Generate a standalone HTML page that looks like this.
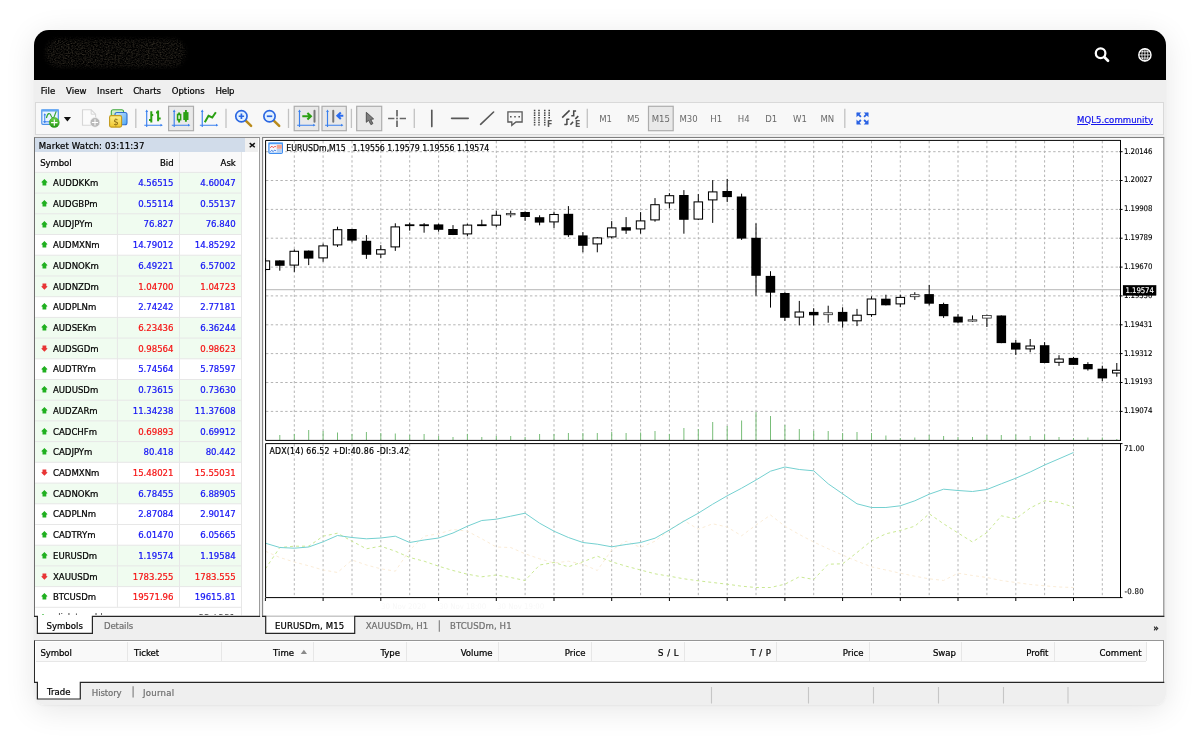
<!DOCTYPE html>
<html lang="en"><head><meta charset="utf-8"><title>WebTerminal</title>
<style>
html,body{margin:0;padding:0;background:#fff}
body{width:1200px;height:745px;position:relative;overflow:hidden;font-family:"DejaVu Sans Condensed", "Liberation Sans", sans-serif;font-size:9.5px;color:#000}
.abs{position:absolute}
.t{white-space:nowrap;-webkit-text-stroke:.22px}
#win{position:absolute;left:34px;top:30px;width:1132px;height:675px;border-radius:15px 15px 11px 11px;background:#efefef;overflow:hidden}
#shadow{position:absolute;left:34px;top:30px;width:1132px;height:675px;border-radius:15px 15px 11px 11px;box-shadow:0 5px 30px rgba(0,0,0,.10),0 1px 2px rgba(0,0,0,.04)}
#in{will-change:transform;position:absolute;left:-34px;top:-30px;width:1200px;height:745px}
</style></head><body>
<div id="shadow"></div>
<div id="win"><div id="in">
<div class="abs" style="left:34px;top:30px;width:1132px;height:49.8px;background:#000"></div>
<svg class="abs" style="left:40px;top:32px" width="160" height="46" viewBox="0 0 160 46"><defs><filter id="nz" x="0" y="0" width="100%" height="100%" color-interpolation-filters="sRGB"><feTurbulence type="fractalNoise" baseFrequency="0.6 0.8" numOctaves="2" seed="7" result="n"/><feColorMatrix in="n" type="matrix" values="0 0 0 0 0.2  0 0 0 0 0.18  0 0 0 0 0.145  1.7 1.3 0 0 -1.25"/></filter><radialGradient id="bl" cx="50%" cy="50%" r="50%" gradientTransform="translate(0 0)"><stop offset="0" stop-color="#fff"/><stop offset=".75" stop-color="#fff"/><stop offset="1" stop-color="#000"/></radialGradient><mask id="mk"><rect x="6" y="7" width="139" height="28" rx="13" fill="#fff" filter="url(#bb)"/></mask><filter id="bb"><feGaussianBlur stdDeviation="2.2"/></filter></defs><rect x="5" y="5" width="142" height="32" rx="15" fill="#050403" filter="url(#bb)"/><g mask="url(#mk)"><rect x="0" y="0" width="160" height="46" filter="url(#nz)"/></g></svg>
<svg class="abs" style="left:1090px;top:44px" width="70" height="22" viewBox="1090 44 70 22" fill="none" stroke="#fff"><circle cx="1100.600" cy="53.200" r="4.800" stroke-width="2.250"/><path d="M1104.500 57.300L1108 60.800" stroke-width="2.700" stroke-linecap="round"/><g stroke-width=".85"><circle cx="1144.900" cy="54.900" r="6.100" stroke-width="1.400"/><path d="M1144.900 48.800V61M1138.800 54.900H1151M1139.700 51.800H1150.100M1139.700 58H1150.100"/><ellipse cx="1144.900" cy="54.900" rx="3" ry="6.100"/></g></svg>
<div class="abs t" style="left:40.65px;top:84.10px;line-height:14px;font-size:9.5px;letter-spacing:0.112px;">File</div>
<div class="abs t" style="left:66.00px;top:84.10px;line-height:14px;font-size:9.5px;letter-spacing:0.059px;">View</div>
<div class="abs t" style="left:97.00px;top:84.10px;line-height:14px;font-size:9.5px;letter-spacing:0.197px;">Insert</div>
<div class="abs t" style="left:133.20px;top:84.10px;line-height:14px;font-size:9.5px;letter-spacing:-0.042px;">Charts</div>
<div class="abs t" style="left:171.70px;top:84.10px;line-height:14px;font-size:9.5px;letter-spacing:-0.012px;">Options</div>
<div class="abs t" style="left:215.50px;top:84.10px;line-height:14px;font-size:9.5px;letter-spacing:-0.150px;">Help</div>
<div class="abs" style="left:34.5px;top:102px;width:1129px;height:32.6px;background:#f8f8f8;border:1px solid #d9d9d9;box-sizing:border-box"></div>
<svg class="abs" style="left:0;top:95px" width="1200" height="45" viewBox="0 95 1200 45" fill="none" font-family='"DejaVu Sans Condensed", "Liberation Sans", sans-serif'>
<defs><linearGradient id="gG" x1="0" y1="0" x2="0" y2="1"><stop offset="0" stop-color="#6fd24a"/><stop offset="1" stop-color="#1f9412"/></linearGradient><linearGradient id="gY" x1="0" y1="0" x2="0" y2="1"><stop offset="0" stop-color="#fff08a"/><stop offset="1" stop-color="#f0c62c"/></linearGradient><linearGradient id="gB" x1="0" y1="0" x2="1" y2="1"><stop offset="0" stop-color="#c9e6ff"/><stop offset="1" stop-color="#4ea6f2"/></linearGradient><linearGradient id="gGr" x1="0" y1="0" x2="0" y2="1"><stop offset="0" stop-color="#d9f3d0"/><stop offset="1" stop-color="#a9dca0"/></linearGradient><linearGradient id="gH" x1="0" y1="0" x2="1" y2="1"><stop offset="0" stop-color="#d9ad2c"/><stop offset="1" stop-color="#9a6a0c"/></linearGradient></defs>
<rect x="168.6" y="106.3" width="24.9" height="24.4" fill="#e9e9e9" stroke="#adadad" stroke-width="1.2"/>
<rect x="294.2" y="106.3" width="24.6" height="24.4" fill="#e9e9e9" stroke="#adadad" stroke-width="1.2"/>
<rect x="322" y="106.3" width="24.3" height="24.4" fill="#e9e9e9" stroke="#adadad" stroke-width="1.2"/>
<rect x="356.7" y="106.3" width="25" height="24.4" fill="#e9e9e9" stroke="#adadad" stroke-width="1.2"/>
<rect x="648.5" y="106.3" width="24.7" height="24.4" fill="#e9e9e9" stroke="#adadad" stroke-width="1.2"/>
<g stroke="#c2c2c2" stroke-width="1.3">
<path d="M135.8 108.8V128"/>
<path d="M226 108.8V128"/>
<path d="M288.5 108.8V128"/>
<path d="M351.4 108.8V128"/>
<path d="M414.3 108.8V128"/>
<path d="M587.3 108.8V128"/>
<path d="M844.8 108.8V128"/>
</g>
<g><rect x="41.8" y="110" width="16.5" height="14.300" rx="1" fill="#e9f3ff" stroke="#4990ea" stroke-width="1.2"/><path d="M41.200 110.400H58.900" stroke="#62a6f3" stroke-width="2.300"/><path d="M44.750 114V122.600M43.300 121.800H52" stroke="#3a80ee" stroke-width="1"/><path d="M44.750 113.300l1.300 2h-2.600zM44.750 123.300l1.300-2h-2.600z" fill="#3a80ee"/><path d="M46.400 118c1.200-5.200 3.400-5.600 4.600-2.400 1 2.700 2.400 3.300 3.300 .8l1.900-5" stroke="#35a535" stroke-width="1.200"/><circle cx="54.300" cy="122.600" r="5" fill="url(#gG)" stroke="#2a9a1a" stroke-width=".5"/><path d="M51.100 122.600H57.500M54.300 119.400V125.800" stroke="#fff" stroke-width="1.150"/><path d="M63.800 117.100H71L67.400 121.400Z" fill="#111"/></g>
<g><path d="M82.500 109.800H91.200l4.400 4.400V125.300H82.500Z" fill="#fbfbfb" stroke="#d6d6d6" stroke-width="1.100"/><path d="M91.200 109.800V114.200H95.600" stroke="#d6d6d6" stroke-width="1"/><circle cx="95" cy="122.400" r="4.900" fill="#b9b9b9" stroke="#f4f4f4" stroke-width=".7"/><path d="M91.900 122.400H98.100M95 119.300V125.500" stroke="#fff" stroke-width="1.050"/></g>
<g><rect x="111.300" y="109.700" width="12.300" height="11.800" rx="2" fill="url(#gGr)" stroke="#3fa83f" stroke-width="1.100"/><rect x="115" y="112.500" width="12" height="12.300" rx="2" fill="url(#gB)" stroke="#2f6fd0" stroke-width="1.100"/><rect x="109.600" y="115.600" width="12" height="11.500" rx="1.600" fill="url(#gY)" stroke="#c39a1c" stroke-width="1.100"/><text x="113.200" y="125.300" font-size="9.500" fill="#80600a" stroke="none">$</text></g>
<g stroke="#3a80ee" stroke-width="1.15" fill="#3a80ee"><path d="M146.7 110.8V127.10000000000001M144.29999999999998 125.2H161.6"/><path d="M146.7 109.6l1.350 2.300h-2.700zM162.79999999999998 125.2l-2.300 1.350v-2.700z" stroke="none"/></g>
<g stroke="#2aa012" stroke-width="2"><path d="M151.300 111.200V122.600M149 120H151.300M151.300 115H153.200"/><path d="M158.100 110.400V121.300M156 112.500H158.100M158.100 118.500H160.700"/></g>
<g stroke="#3a80ee" stroke-width="1.15" fill="#3a80ee"><path d="M174.2 110.8V127.10000000000001M171.79999999999998 125.2H189.1"/><path d="M174.2 109.6l1.350 2.300h-2.700zM190.29999999999998 125.2l-2.300 1.350v-2.700z" stroke="none"/></g>
<g stroke="#2aa012"><path d="M179.100 112.500V122.500M185.900 110V121.800" stroke-width="1.900"/><rect x="177.600" y="114.500" width="3" height="5.200" fill="#f4fff0" stroke-width="1.600"/><rect x="183.300" y="112.100" width="5.200" height="7.900" fill="#2aa012" stroke="none"/></g>
<g stroke="#3a80ee" stroke-width="1.15" fill="#3a80ee"><path d="M202.25 110.8V127.10000000000001M199.85 125.2H217.1"/><path d="M202.25 109.6l1.350 2.300h-2.700zM218.29999999999998 125.2l-2.300 1.350v-2.700z" stroke="none"/></g>
<path d="M204.800 122.300l3.700-6.500 3.750 1.700 3.600-5.200" stroke="#2aa012" stroke-width="2" stroke-linejoin="miter"/>
<g><path d="M245.70000000000002 120.600L251.1 125.900" stroke="#b98a1a" stroke-width="2.500" stroke-linecap="round"/><circle cx="241.4" cy="116.250" r="5.650" fill="#e3f1ff" stroke="#2a66e2" stroke-width="1.650"/><path d="M238.70000000000002 116.250H244.1M241.4 113.550V118.950" stroke="#2a66e2" stroke-width="1.700"/></g>
<g><path d="M273.8 120.600L279.2 125.900" stroke="#b98a1a" stroke-width="2.500" stroke-linecap="round"/><circle cx="269.5" cy="116.250" r="5.650" fill="#e3f1ff" stroke="#2a66e2" stroke-width="1.650"/><path d="M266.8 116.250H272.2" stroke="#2a66e2" stroke-width="1.700"/></g>
<g stroke="#3a80ee" stroke-width="1.15" fill="#3a80ee"><path d="M299.5 110.8V127.10000000000001M297.1 125.2H314.3"/><path d="M299.5 109.6l1.350 2.300h-2.700zM315.5 125.2l-2.300 1.350v-2.700z" stroke="none"/></g>
<path d="M302.300 116.250H310.200M307.400 112.900l3.500 3.350-3.500 3.350" stroke="#2aa012" stroke-width="2.100"/><path d="M314.500 110.800V121.800" stroke="#777" stroke-width="2" stroke-linecap="round"/>
<g stroke="#3a80ee" stroke-width="1.15" fill="#3a80ee"><path d="M327.5 110.8V127.10000000000001M325.1 125.2H342.2"/><path d="M327.5 109.6l1.350 2.300h-2.700zM343.4 125.2l-2.300 1.350v-2.700z" stroke="none"/></g>
<path d="M333.250 110.800V121.800" stroke="#777" stroke-width="2" stroke-linecap="round"/><path d="M343.300 115.700H338.200M340.800 112.500l-3.400 3.200 3.400 3.200" stroke="#2a6cf0" stroke-width="2.100"/>
<path d="M366.300 112.300V122.300L368.600 120.300L370.900 124.600L372.900 123.600L370.700 119.400L373.600 118.900Z" fill="#7d7d7d" stroke="#474747" stroke-width=".9" stroke-linejoin="round"/>
<path d="M397 110V116.600M397 120.400V127.100M388.100 118.500H394.400M399.700 118.500H406" stroke="#666" stroke-width="1.700"/><rect x="396.100" y="117.600" width="1.800" height="1.800" fill="#666"/>
<g stroke="#585858" stroke-width="1.650" stroke-linecap="round"><path d="M431.800 110.400V126.600"/><path d="M451.600 118.350H468.200"/><path d="M480.600 124.300L493.600 112"/></g>
<path d="M507.900 111.800H522.100V122H516l-4.200 3.300V122H507.900Z" stroke="#585858" stroke-width="1.300" stroke-linejoin="miter"/><path d="M510 116.700H511.600M514.200 116.700H515.800M518.400 116.700H520" stroke="#585858" stroke-width="1.500"/>
<g stroke="#3f3f3f" stroke-width="1.550" stroke-dasharray="1.450 0.950"><path d="M534.600 109.800V125.500M539 109.800V125.500M544.750 109.800V125.500M549.200 109.800V119"/></g><text x="546.900" y="127.100" font-size="8.800" font-weight="bold" fill="#585858">F</text>
<g stroke="#484848" stroke-width="1.550"><path d="M562.200 117.600l7.400-7.200"/><path d="M570.400 124.700l2.700-2.900M575.300 118.900l3-2.700" stroke-width="1.600"/><path d="M573.700 110.300V116.400M573.700 110.900h2.400M573.700 115.800h-2.400M566.900 118.700V125M566.900 119.300h2.400M566.900 124.400h-2.600" stroke-width="1.500"/></g><text x="574.900" y="127.100" font-size="8.800" font-weight="bold" fill="#585858">E</text>
<g font-size="9.500" fill="#6a6a6a" text-anchor="middle">
<text x="605.6" y="121.900">M1</text>
<text x="633.3" y="121.900">M5</text>
<text x="660.8" y="121.900">M15</text>
<text x="688.6" y="121.900">M30</text>
<text x="716.2" y="121.900">H1</text>
<text x="743.7" y="121.900">H4</text>
<text x="771.3" y="121.900">D1</text>
<text x="800" y="121.900">W1</text>
<text x="827.3" y="121.900">MN</text>
</g>
<g fill="#2a62e4" stroke="#2a62e4" stroke-width="1.500" stroke-linecap="butt"><path d="M857.200 113.200l3.700 3.700M867.800 113.200l-3.700 3.700M857.200 123.700l3.700-3.700M867.800 123.700l-3.700-3.700" stroke-width="1.800"/><path d="M856.500 112.500h4.800l-4.800 4.800zM868.500 112.500h-4.800l4.800 4.800zM856.500 124.400h4.800l-4.800-4.800zM868.500 124.400h-4.800l4.800-4.800z" stroke="none"/></g>
</svg>
<div class="abs t" style="left:1077.06px;top:112.60px;line-height:14px;font-size:9.5px;letter-spacing:0.056px;color:#1414ee;text-decoration:underline;">MQL5.community</div>
<div class="abs" style="left:34px;top:137px;width:225.7px;height:479.6px;background:#fff;border:1.2px solid #8e8e8e;border-left:1.1px solid #6e6e6e;border-right:1.5px solid #9c9c9c;border-bottom:none;box-sizing:border-box"></div>
<div class="abs" style="left:35.2px;top:138.3px;width:209.8px;height:13.6px;background:#d1dcea"></div>
<div class="abs t" style="left:38.80px;top:139.00px;line-height:14px;font-size:9.5px;letter-spacing:0.141px;">Market Watch: 03:11:37</div>
<div class="abs" style="left:245px;top:138.3px;width:13.2px;height:13.7px;background:#f0f0f0"></div>
<svg class="abs" style="left:248px;top:141px" width="9" height="9" viewBox="248 141 9 9"><path d="M249.7 143.1l5.1 4.1M254.8 143.1l-5.1 4.1" stroke="#111" stroke-width="1.45"/></svg>
<div class="abs" style="left:35.2px;top:152px;width:206.3px;height:20.3px;background:#f9f9f9"></div>
<div class="abs t" style="left:40.20px;top:156.00px;line-height:14px;font-size:9.5px;letter-spacing:-0.091px;">Symbol</div>
<div class="abs t" style="left:159.93px;top:156.00px;line-height:14px;font-size:9.5px;">Bid</div>
<div class="abs t" style="left:220.55px;top:156.00px;line-height:14px;font-size:9.5px;">Ask</div>
<div class="abs" style="left:35.2px;top:172.40px;width:206.3px;height:20.71px;background:#f0fcf0"></div>
<svg class="abs" style="left:40.6px;top:179.16px" width="7" height="7" viewBox="0 0 7 7"><path d="M3.4 0L6.6 3.3L5.3 3.7V6.4H1.5V3.7L0.2 3.3Z" fill="#20b020"/></svg>
<div class="abs t" style="left:53.00px;top:176.00px;line-height:14px;font-size:9.5px;letter-spacing:0.070px;">AUDDKKm</div>
<div class="abs t" style="left:138.16px;top:176.00px;line-height:14px;font-size:9.5px;color:#1414f5;">4.56515</div>
<div class="abs t" style="left:200.26px;top:176.00px;line-height:14px;font-size:9.5px;color:#1414f5;">4.60047</div>
<div class="abs" style="left:35.2px;top:193.11px;width:206.3px;height:20.71px;background:#f0fcf0"></div>
<svg class="abs" style="left:40.6px;top:199.87px" width="7" height="7" viewBox="0 0 7 7"><path d="M3.4 0L6.6 3.3L5.3 3.7V6.4H1.5V3.7L0.2 3.3Z" fill="#20b020"/></svg>
<div class="abs t" style="left:53.00px;top:196.72px;line-height:14px;font-size:9.5px;">AUDGBPm</div>
<div class="abs t" style="left:138.16px;top:196.72px;line-height:14px;font-size:9.5px;color:#1414f5;">0.55114</div>
<div class="abs t" style="left:200.26px;top:196.72px;line-height:14px;font-size:9.5px;color:#1414f5;">0.55137</div>
<div class="abs" style="left:35.2px;top:213.82px;width:206.3px;height:20.71px;background:#f0fcf0"></div>
<svg class="abs" style="left:40.6px;top:220.57px" width="7" height="7" viewBox="0 0 7 7"><path d="M3.4 0L6.6 3.3L5.3 3.7V6.4H1.5V3.7L0.2 3.3Z" fill="#20b020"/></svg>
<div class="abs t" style="left:53.00px;top:217.42px;line-height:14px;font-size:9.5px;">AUDJPYm</div>
<div class="abs t" style="left:143.59px;top:217.42px;line-height:14px;font-size:9.5px;color:#1414f5;">76.827</div>
<div class="abs t" style="left:205.69px;top:217.42px;line-height:14px;font-size:9.5px;color:#1414f5;">76.840</div>
<svg class="abs" style="left:40.6px;top:241.28px" width="7" height="7" viewBox="0 0 7 7"><path d="M3.4 0L6.6 3.3L5.3 3.7V6.4H1.5V3.7L0.2 3.3Z" fill="#20b020"/></svg>
<div class="abs t" style="left:53.00px;top:238.13px;line-height:14px;font-size:9.5px;">AUDMXNm</div>
<div class="abs t" style="left:132.72px;top:238.13px;line-height:14px;font-size:9.5px;color:#1414f5;">14.79012</div>
<div class="abs t" style="left:194.82px;top:238.13px;line-height:14px;font-size:9.5px;color:#1414f5;">14.85292</div>
<div class="abs" style="left:35.2px;top:255.24px;width:206.3px;height:20.71px;background:#f0fcf0"></div>
<svg class="abs" style="left:40.6px;top:262.00px" width="7" height="7" viewBox="0 0 7 7"><path d="M3.4 0L6.6 3.3L5.3 3.7V6.4H1.5V3.7L0.2 3.3Z" fill="#20b020"/></svg>
<div class="abs t" style="left:53.00px;top:258.85px;line-height:14px;font-size:9.5px;">AUDNOKm</div>
<div class="abs t" style="left:138.16px;top:258.85px;line-height:14px;font-size:9.5px;color:#1414f5;">6.49221</div>
<div class="abs t" style="left:200.26px;top:258.85px;line-height:14px;font-size:9.5px;color:#1414f5;">6.57002</div>
<div class="abs" style="left:35.2px;top:275.95px;width:206.3px;height:20.71px;background:#f0fcf0"></div>
<svg class="abs" style="left:40.6px;top:282.91px" width="7" height="7" viewBox="0 0 7 7"><path d="M3.4 6.8L6.6 3.5L5.3 3.100V0.400H1.500V3.100L0.200 3.500Z" fill="#e83535"/></svg>
<div class="abs t" style="left:53.00px;top:279.56px;line-height:14px;font-size:9.5px;">AUDNZDm</div>
<div class="abs t" style="left:138.16px;top:279.56px;line-height:14px;font-size:9.5px;color:#f51414;">1.04700</div>
<div class="abs t" style="left:200.26px;top:279.56px;line-height:14px;font-size:9.5px;color:#f51414;">1.04723</div>
<svg class="abs" style="left:40.6px;top:303.42px" width="7" height="7" viewBox="0 0 7 7"><path d="M3.4 0L6.6 3.3L5.3 3.7V6.4H1.5V3.7L0.2 3.3Z" fill="#20b020"/></svg>
<div class="abs t" style="left:53.00px;top:300.27px;line-height:14px;font-size:9.5px;">AUDPLNm</div>
<div class="abs t" style="left:138.16px;top:300.27px;line-height:14px;font-size:9.5px;color:#1414f5;">2.74242</div>
<div class="abs t" style="left:200.26px;top:300.27px;line-height:14px;font-size:9.5px;color:#1414f5;">2.77181</div>
<div class="abs" style="left:35.2px;top:317.37px;width:206.3px;height:20.71px;background:#f0fcf0"></div>
<svg class="abs" style="left:40.6px;top:324.13px" width="7" height="7" viewBox="0 0 7 7"><path d="M3.4 0L6.6 3.3L5.3 3.7V6.4H1.5V3.7L0.2 3.3Z" fill="#20b020"/></svg>
<div class="abs t" style="left:53.00px;top:320.98px;line-height:14px;font-size:9.5px;">AUDSEKm</div>
<div class="abs t" style="left:138.16px;top:320.98px;line-height:14px;font-size:9.5px;color:#f51414;">6.23436</div>
<div class="abs t" style="left:200.26px;top:320.98px;line-height:14px;font-size:9.5px;color:#1414f5;">6.36244</div>
<div class="abs" style="left:35.2px;top:338.08px;width:206.3px;height:20.71px;background:#f0fcf0"></div>
<svg class="abs" style="left:40.6px;top:345.04px" width="7" height="7" viewBox="0 0 7 7"><path d="M3.4 6.8L6.6 3.5L5.3 3.100V0.400H1.500V3.100L0.200 3.500Z" fill="#e83535"/></svg>
<div class="abs t" style="left:53.00px;top:341.69px;line-height:14px;font-size:9.5px;">AUDSGDm</div>
<div class="abs t" style="left:138.16px;top:341.69px;line-height:14px;font-size:9.5px;color:#f51414;">0.98564</div>
<div class="abs t" style="left:200.26px;top:341.69px;line-height:14px;font-size:9.5px;color:#f51414;">0.98623</div>
<svg class="abs" style="left:40.6px;top:365.55px" width="7" height="7" viewBox="0 0 7 7"><path d="M3.4 0L6.6 3.3L5.3 3.7V6.4H1.5V3.7L0.2 3.3Z" fill="#20b020"/></svg>
<div class="abs t" style="left:53.00px;top:362.40px;line-height:14px;font-size:9.5px;">AUDTRYm</div>
<div class="abs t" style="left:138.16px;top:362.40px;line-height:14px;font-size:9.5px;color:#1414f5;">5.74564</div>
<div class="abs t" style="left:200.26px;top:362.40px;line-height:14px;font-size:9.5px;color:#1414f5;">5.78597</div>
<div class="abs" style="left:35.2px;top:379.50px;width:206.3px;height:20.71px;background:#f0fcf0"></div>
<svg class="abs" style="left:40.6px;top:386.26px" width="7" height="7" viewBox="0 0 7 7"><path d="M3.4 0L6.6 3.3L5.3 3.7V6.4H1.5V3.7L0.2 3.3Z" fill="#20b020"/></svg>
<div class="abs t" style="left:53.00px;top:383.11px;line-height:14px;font-size:9.5px;">AUDUSDm</div>
<div class="abs t" style="left:138.16px;top:383.11px;line-height:14px;font-size:9.5px;color:#1414f5;">0.73615</div>
<div class="abs t" style="left:200.26px;top:383.11px;line-height:14px;font-size:9.5px;color:#1414f5;">0.73630</div>
<div class="abs" style="left:35.2px;top:400.21px;width:206.3px;height:20.71px;background:#f0fcf0"></div>
<svg class="abs" style="left:40.6px;top:406.97px" width="7" height="7" viewBox="0 0 7 7"><path d="M3.4 0L6.6 3.3L5.3 3.7V6.4H1.5V3.7L0.2 3.3Z" fill="#20b020"/></svg>
<div class="abs t" style="left:53.00px;top:403.82px;line-height:14px;font-size:9.5px;">AUDZARm</div>
<div class="abs t" style="left:132.72px;top:403.82px;line-height:14px;font-size:9.5px;color:#1414f5;">11.34238</div>
<div class="abs t" style="left:194.82px;top:403.82px;line-height:14px;font-size:9.5px;color:#1414f5;">11.37608</div>
<div class="abs" style="left:35.2px;top:420.92px;width:206.3px;height:20.71px;background:#f0fcf0"></div>
<svg class="abs" style="left:40.6px;top:427.68px" width="7" height="7" viewBox="0 0 7 7"><path d="M3.4 0L6.6 3.3L5.3 3.7V6.4H1.5V3.7L0.2 3.3Z" fill="#20b020"/></svg>
<div class="abs t" style="left:53.00px;top:424.53px;line-height:14px;font-size:9.5px;">CADCHFm</div>
<div class="abs t" style="left:138.16px;top:424.53px;line-height:14px;font-size:9.5px;color:#f51414;">0.69893</div>
<div class="abs t" style="left:200.26px;top:424.53px;line-height:14px;font-size:9.5px;color:#1414f5;">0.69912</div>
<div class="abs" style="left:35.2px;top:441.63px;width:206.3px;height:20.71px;background:#f0fcf0"></div>
<svg class="abs" style="left:40.6px;top:448.39px" width="7" height="7" viewBox="0 0 7 7"><path d="M3.4 0L6.6 3.3L5.3 3.7V6.4H1.5V3.7L0.2 3.3Z" fill="#20b020"/></svg>
<div class="abs t" style="left:53.00px;top:445.24px;line-height:14px;font-size:9.5px;">CADJPYm</div>
<div class="abs t" style="left:143.59px;top:445.24px;line-height:14px;font-size:9.5px;color:#1414f5;">80.418</div>
<div class="abs t" style="left:205.69px;top:445.24px;line-height:14px;font-size:9.5px;color:#1414f5;">80.442</div>
<svg class="abs" style="left:40.6px;top:469.30px" width="7" height="7" viewBox="0 0 7 7"><path d="M3.4 6.8L6.6 3.5L5.3 3.100V0.400H1.500V3.100L0.200 3.500Z" fill="#e83535"/></svg>
<div class="abs t" style="left:53.00px;top:465.95px;line-height:14px;font-size:9.5px;">CADMXNm</div>
<div class="abs t" style="left:132.72px;top:465.95px;line-height:14px;font-size:9.5px;color:#f51414;">15.48021</div>
<div class="abs t" style="left:194.82px;top:465.95px;line-height:14px;font-size:9.5px;color:#f51414;">15.55031</div>
<div class="abs" style="left:35.2px;top:483.05px;width:206.3px;height:20.71px;background:#f0fcf0"></div>
<svg class="abs" style="left:40.6px;top:489.81px" width="7" height="7" viewBox="0 0 7 7"><path d="M3.4 0L6.6 3.3L5.3 3.7V6.4H1.5V3.7L0.2 3.3Z" fill="#20b020"/></svg>
<div class="abs t" style="left:53.00px;top:486.66px;line-height:14px;font-size:9.5px;">CADNOKm</div>
<div class="abs t" style="left:138.16px;top:486.66px;line-height:14px;font-size:9.5px;color:#1414f5;">6.78455</div>
<div class="abs t" style="left:200.26px;top:486.66px;line-height:14px;font-size:9.5px;color:#1414f5;">6.88905</div>
<svg class="abs" style="left:40.6px;top:510.51px" width="7" height="7" viewBox="0 0 7 7"><path d="M3.4 0L6.6 3.3L5.3 3.7V6.4H1.5V3.7L0.2 3.3Z" fill="#20b020"/></svg>
<div class="abs t" style="left:53.00px;top:507.37px;line-height:14px;font-size:9.5px;">CADPLNm</div>
<div class="abs t" style="left:138.16px;top:507.37px;line-height:14px;font-size:9.5px;color:#1414f5;">2.87084</div>
<div class="abs t" style="left:200.26px;top:507.37px;line-height:14px;font-size:9.5px;color:#1414f5;">2.90147</div>
<svg class="abs" style="left:40.6px;top:531.23px" width="7" height="7" viewBox="0 0 7 7"><path d="M3.4 0L6.6 3.3L5.3 3.7V6.4H1.5V3.7L0.2 3.3Z" fill="#20b020"/></svg>
<div class="abs t" style="left:53.00px;top:528.08px;line-height:14px;font-size:9.5px;">CADTRYm</div>
<div class="abs t" style="left:138.16px;top:528.08px;line-height:14px;font-size:9.5px;color:#1414f5;">6.01470</div>
<div class="abs t" style="left:200.26px;top:528.08px;line-height:14px;font-size:9.5px;color:#1414f5;">6.05665</div>
<div class="abs" style="left:35.2px;top:545.18px;width:206.3px;height:20.71px;background:#f0fcf0"></div>
<svg class="abs" style="left:40.6px;top:551.94px" width="7" height="7" viewBox="0 0 7 7"><path d="M3.4 0L6.6 3.3L5.3 3.7V6.4H1.5V3.7L0.2 3.3Z" fill="#20b020"/></svg>
<div class="abs t" style="left:53.00px;top:548.79px;line-height:14px;font-size:9.5px;">EURUSDm</div>
<div class="abs t" style="left:138.16px;top:548.79px;line-height:14px;font-size:9.5px;color:#1414f5;">1.19574</div>
<div class="abs t" style="left:200.26px;top:548.79px;line-height:14px;font-size:9.5px;color:#1414f5;">1.19584</div>
<div class="abs" style="left:35.2px;top:565.89px;width:206.3px;height:20.71px;background:#f0fcf0"></div>
<svg class="abs" style="left:40.6px;top:572.84px" width="7" height="7" viewBox="0 0 7 7"><path d="M3.4 6.8L6.6 3.5L5.3 3.100V0.400H1.500V3.100L0.200 3.500Z" fill="#e83535"/></svg>
<div class="abs t" style="left:53.00px;top:569.50px;line-height:14px;font-size:9.5px;">XAUUSDm</div>
<div class="abs t" style="left:132.72px;top:569.50px;line-height:14px;font-size:9.5px;color:#f51414;">1783.255</div>
<div class="abs t" style="left:194.82px;top:569.50px;line-height:14px;font-size:9.5px;color:#f51414;">1783.555</div>
<svg class="abs" style="left:40.6px;top:593.36px" width="7" height="7" viewBox="0 0 7 7"><path d="M3.4 0L6.6 3.3L5.3 3.7V6.4H1.5V3.7L0.2 3.3Z" fill="#20b020"/></svg>
<div class="abs t" style="left:53.00px;top:590.21px;line-height:14px;font-size:9.5px;">BTCUSDm</div>
<div class="abs t" style="left:132.72px;top:590.21px;line-height:14px;font-size:9.5px;color:#f51414;">19571.96</div>
<div class="abs t" style="left:194.82px;top:590.21px;line-height:14px;font-size:9.5px;color:#1414f5;">19615.81</div>
<div class="abs" style="left:35.7px;top:608.11px;width:205.8px;height:7.29px;overflow:hidden"><div class="abs t" style="left:17.8px;top:2.3px;line-height:14px;font-size:9.5px;color:#555">click to add...</div><div class="abs t" style="left:163px;top:2.9px;line-height:14px;font-size:9.5px;color:#555;letter-spacing:.15px">22 / 231</div><div class="abs" style="left:6.3px;top:5.6px;width:2.5px;height:2px;background:#7fd07f"></div></div>
<svg class="abs" style="left:0;top:0" width="300" height="745"><g stroke="#e7e7e7" stroke-width="1">
<path d="M35.2 172.4H241.5"/>
<path d="M35.2 193.1H241.5"/>
<path d="M35.2 213.8H241.5"/>
<path d="M35.2 234.5H241.5"/>
<path d="M35.2 255.2H241.5"/>
<path d="M35.2 276.0H241.5"/>
<path d="M35.2 296.7H241.5"/>
<path d="M35.2 317.4H241.5"/>
<path d="M35.2 338.1H241.5"/>
<path d="M35.2 358.8H241.5"/>
<path d="M35.2 379.5H241.5"/>
<path d="M35.2 400.2H241.5"/>
<path d="M35.2 420.9H241.5"/>
<path d="M35.2 441.6H241.5"/>
<path d="M35.2 462.3H241.5"/>
<path d="M35.2 483.1H241.5"/>
<path d="M35.2 503.8H241.5"/>
<path d="M35.2 524.5H241.5"/>
<path d="M35.2 545.2H241.5"/>
<path d="M35.2 565.9H241.5"/>
<path d="M35.2 586.6H241.5"/>
<path d="M35.2 607.3H241.5"/>
<path d="M117.4 152V607.3"/>
<path d="M179.5 152V607.3"/>
<path d="M241.5 152V615.5"/>
</g>
<path d="M37.4 616.4V633.4H92.4V616.4Z" fill="#fff"/><path d="M34 616.4H37.4V633.4H92.4V616.4H260.1" fill="none" stroke="#262626" stroke-width="1.2"/></svg>
<div class="abs t" style="left:46.50px;top:618.70px;line-height:14px;font-size:9.5px;letter-spacing:0.015px;">Symbols</div>
<div class="abs t" style="left:103.90px;top:619.40px;line-height:14px;font-size:9.5px;letter-spacing:-0.063px;color:#707070;">Details</div>
<svg class="abs" style="left:0;top:0" width="1200" height="745" viewBox="0 0 1200 745" font-family='"DejaVu Sans Condensed", "Liberation Sans", sans-serif'>
<rect x="262.600" y="137.500" width="901.200" height="478.800" fill="#fff" stroke="#7e7e7e" stroke-width="1.050"/>
<g stroke="#b4b4b4" stroke-width="1" stroke-dasharray="2.400 2.400" fill="none">
<path d="M294.3 141V440M294.3 444V597"/>
<path d="M323.1 141V440M323.1 444V597"/>
<path d="M352.0 141V440M352.0 444V597"/>
<path d="M380.8 141V440M380.8 444V597"/>
<path d="M409.7 141V440M409.7 444V597"/>
<path d="M438.6 141V440M438.6 444V597"/>
<path d="M467.4 141V440M467.4 444V597"/>
<path d="M496.3 141V440M496.3 444V597"/>
<path d="M525.1 141V440M525.1 444V597"/>
<path d="M554.0 141V440M554.0 444V597"/>
<path d="M582.9 141V440M582.9 444V597"/>
<path d="M611.7 141V440M611.7 444V597"/>
<path d="M640.6 141V440M640.6 444V597"/>
<path d="M669.4 141V440M669.4 444V597"/>
<path d="M698.3 141V440M698.3 444V597"/>
<path d="M727.2 141V440M727.2 444V597"/>
<path d="M756.0 141V440M756.0 444V597"/>
<path d="M784.9 141V440M784.9 444V597"/>
<path d="M813.7 141V440M813.7 444V597"/>
<path d="M842.6 141V440M842.6 444V597"/>
<path d="M871.5 141V440M871.5 444V597"/>
<path d="M900.3 141V440M900.3 444V597"/>
<path d="M929.2 141V440M929.2 444V597"/>
<path d="M958.0 141V440M958.0 444V597"/>
<path d="M986.9 141V440M986.9 444V597"/>
<path d="M1015.8 141V440M1015.8 444V597"/>
<path d="M1044.6 141V440M1044.6 444V597"/>
<path d="M1073.5 141V440M1073.5 444V597"/>
<path d="M1102.3 141V440M1102.3 444V597"/>
<path d="M266 151.7H1120"/>
<path d="M266 180.5H1120"/>
<path d="M266 209.4H1120"/>
<path d="M266 238.2H1120"/>
<path d="M266 267.1H1120"/>
<path d="M266 295.9H1120"/>
<path d="M266 324.8H1120"/>
<path d="M266 353.6H1120"/>
<path d="M266 382.5H1120"/>
<path d="M266 411.4H1120"/>
</g>
<path d="M266 289.600H1120" stroke="#c4c4c4" stroke-width="1.100"/>
<g stroke="#78bd78" stroke-width="1">
<path d="M279.8 440V435.0"/>
<path d="M294.3 440V434.0"/>
<path d="M308.7 440V430.0"/>
<path d="M323.1 440V431.0"/>
<path d="M337.5 440V432.5"/>
<path d="M352.0 440V434.0"/>
<path d="M366.4 440V432.0"/>
<path d="M380.8 440V433.0"/>
<path d="M395.3 440V433.5"/>
<path d="M409.7 440V435.0"/>
<path d="M424.1 440V434.0"/>
<path d="M438.6 440V436.0"/>
<path d="M453.0 440V437.0"/>
<path d="M467.4 440V434.0"/>
<path d="M481.8 440V437.0"/>
<path d="M496.3 440V436.0"/>
<path d="M510.7 440V436.0"/>
<path d="M525.1 440V437.0"/>
<path d="M539.6 440V434.0"/>
<path d="M554.0 440V434.0"/>
<path d="M568.4 440V433.0"/>
<path d="M582.9 440V433.0"/>
<path d="M597.3 440V433.0"/>
<path d="M611.7 440V432.0"/>
<path d="M626.1 440V433.0"/>
<path d="M640.6 440V432.5"/>
<path d="M655.0 440V431.0"/>
<path d="M669.4 440V434.0"/>
<path d="M683.9 440V428.0"/>
<path d="M698.3 440V429.0"/>
<path d="M712.7 440V422.0"/>
<path d="M727.2 440V426.0"/>
<path d="M741.6 440V420.5"/>
<path d="M756.0 440V412.0"/>
<path d="M770.5 440V416.0"/>
<path d="M784.9 440V425.0"/>
<path d="M799.3 440V429.0"/>
<path d="M813.7 440V431.0"/>
<path d="M828.2 440V431.0"/>
<path d="M842.6 440V433.0"/>
<path d="M857.0 440V432.0"/>
<path d="M871.5 440V433.0"/>
<path d="M885.9 440V435.5"/>
<path d="M900.3 440V438.0"/>
<path d="M914.8 440V437.5"/>
<path d="M929.2 440V435.0"/>
<path d="M943.6 440V436.0"/>
<path d="M958.0 440V437.0"/>
<path d="M972.5 440V437.0"/>
<path d="M986.9 440V435.0"/>
<path d="M1001.3 440V435.0"/>
<path d="M1015.8 440V434.5"/>
<path d="M1030.2 440V436.0"/>
<path d="M1044.6 440V434.5"/>
<path d="M1059.0 440V437.0"/>
<path d="M1073.5 440V438.0"/>
<path d="M1087.9 440V437.5"/>
<path d="M1102.3 440V437.5"/>
<path d="M1116.8 440V439.0"/>
</g>
<clipPath id="cm"><rect x="265" y="140" width="856" height="300"/></clipPath>
<g clip-path="url(#cm)" stroke="#000" stroke-width="1">
<path d="M265.4 258.2V271.3"/>
<rect x="261.15" y="260.90" width="8.50" height="8.60" fill="#fff" stroke-width="1.050"/>
<path d="M279.8 260.3V270.7"/>
<rect x="275.1" y="260.4" width="9.5" height="5.4" fill="#000" stroke="none"/>
<path d="M294.3 249.3V271.9"/>
<rect x="290.01" y="251.30" width="8.50" height="13.80" fill="#fff" stroke-width="1.050"/>
<path d="M308.7 250.5V265.1"/>
<rect x="303.9" y="250.6" width="9.5" height="8.0" fill="#000" stroke="none"/>
<path d="M323.1 243.7V261.7"/>
<rect x="318.87" y="245.90" width="8.50" height="12.00" fill="#fff" stroke-width="1.050"/>
<path d="M337.5 226.7V246.9"/>
<rect x="333.30" y="229.70" width="8.50" height="15.20" fill="#fff" stroke-width="1.050"/>
<path d="M352.0 228.9V242.3"/>
<rect x="347.2" y="229.0" width="9.5" height="11.6" fill="#000" stroke="none"/>
<path d="M366.4 235.1V258.9"/>
<rect x="361.7" y="240.8" width="9.5" height="14.0" fill="#000" stroke="none"/>
<path d="M380.8 245.1V257.9"/>
<rect x="376.59" y="249.70" width="8.50" height="4.40" fill="#fff" stroke-width="1.050"/>
<path d="M395.3 223.3V250.9"/>
<rect x="391.02" y="226.90" width="8.50" height="20.00" fill="#fff" stroke-width="1.050"/>
<path d="M409.7 222.7V230.7"/>
<rect x="404.9" y="224.3" width="9.5" height="1.8" fill="#000" stroke="none"/>
<path d="M424.1 223.1V232.7"/>
<rect x="419.4" y="224.3" width="9.5" height="1.8" fill="#000" stroke="none"/>
<path d="M438.6 223.7V231.7"/>
<rect x="433.8" y="224.4" width="9.5" height="5.4" fill="#000" stroke="none"/>
<path d="M453.0 225.1V235.1"/>
<rect x="448.2" y="229.0" width="9.5" height="6.0" fill="#000" stroke="none"/>
<path d="M467.4 223.7V236.3"/>
<rect x="463.17" y="225.10" width="8.50" height="8.80" fill="#fff" stroke-width="1.050"/>
<path d="M481.8 219.7V226.1"/>
<rect x="477.1" y="224.3" width="9.5" height="1.8" fill="#000" stroke="none"/>
<path d="M496.3 210.7V227.3"/>
<rect x="492.03" y="215.30" width="8.50" height="9.80" fill="#fff" stroke-width="1.050"/>
<path d="M510.7 210.7V217.3"/>
<rect x="506.36" y="213.40" width="8.70" height="1.40" fill="#fff" stroke="#2a2a2a" stroke-width="0.800"/>
<path d="M525.1 211.3V220.9"/>
<rect x="520.4" y="212.0" width="9.5" height="5.0" fill="#000" stroke="none"/>
<path d="M539.6 215.3V225.3"/>
<rect x="534.8" y="217.2" width="9.5" height="5.4" fill="#000" stroke="none"/>
<path d="M554.0 211.7V227.9"/>
<rect x="549.75" y="214.50" width="8.50" height="7.40" fill="#fff" stroke-width="1.050"/>
<path d="M568.4 206.1V236.9"/>
<rect x="563.7" y="213.8" width="9.5" height="21.4" fill="#000" stroke="none"/>
<path d="M582.9 232.1V252.3"/>
<rect x="578.1" y="235.4" width="9.5" height="10.4" fill="#000" stroke="none"/>
<path d="M597.3 237.1V252.3"/>
<rect x="593.04" y="237.90" width="8.50" height="6.00" fill="#fff" stroke-width="1.050"/>
<path d="M611.7 221.1V238.3"/>
<rect x="607.47" y="227.90" width="8.50" height="9.00" fill="#fff" stroke-width="1.050"/>
<path d="M626.1 217.1V233.9"/>
<rect x="621.4" y="227.2" width="9.5" height="3.4" fill="#000" stroke="none"/>
<path d="M640.6 212.1V233.7"/>
<rect x="636.33" y="220.90" width="8.50" height="8.00" fill="#fff" stroke-width="1.050"/>
<path d="M655.0 198.1V221.7"/>
<rect x="650.76" y="204.70" width="8.50" height="15.20" fill="#fff" stroke-width="1.050"/>
<path d="M669.4 193.1V208.3"/>
<rect x="665.19" y="195.70" width="8.50" height="7.20" fill="#fff" stroke-width="1.050"/>
<path d="M683.9 190.1V233.7"/>
<rect x="679.1" y="195.0" width="9.5" height="24.8" fill="#000" stroke="none"/>
<path d="M698.3 194.1V219.9"/>
<rect x="694.05" y="201.90" width="8.50" height="17.20" fill="#fff" stroke-width="1.050"/>
<path d="M712.7 180.1V222.9"/>
<rect x="708.48" y="191.90" width="8.50" height="8.00" fill="#fff" stroke-width="1.050"/>
<path d="M727.2 178.9V202.1"/>
<rect x="722.4" y="191.0" width="9.5" height="6.1" fill="#000" stroke="none"/>
<path d="M741.6 193.7V239.9"/>
<rect x="736.8" y="196.5" width="9.5" height="42.1" fill="#000" stroke="none"/>
<path d="M756.0 223.3V295.8"/>
<rect x="751.3" y="237.8" width="9.5" height="38.0" fill="#000" stroke="none"/>
<path d="M770.5 271.2V307.6"/>
<rect x="765.7" y="275.9" width="9.5" height="16.8" fill="#000" stroke="none"/>
<path d="M784.9 292.2V320.9"/>
<rect x="780.1" y="293.0" width="9.5" height="24.8" fill="#000" stroke="none"/>
<path d="M799.3 300.9V325.4"/>
<rect x="795.06" y="312.00" width="8.50" height="5.10" fill="#fff" stroke-width="1.050"/>
<path d="M813.7 308.2V325.4"/>
<rect x="809.0" y="311.9" width="9.5" height="3.4" fill="#000" stroke="none"/>
<path d="M828.2 305.7V322.7"/>
<rect x="823.82" y="312.80" width="8.70" height="1.90" fill="#fff" stroke="#2a2a2a" stroke-width="0.800"/>
<path d="M842.6 307.3V327.7"/>
<rect x="837.9" y="311.9" width="9.5" height="9.6" fill="#000" stroke="none"/>
<path d="M857.0 308.9V326.1"/>
<rect x="852.78" y="315.20" width="8.50" height="5.60" fill="#fff" stroke-width="1.050"/>
<path d="M871.5 296.3V316.8"/>
<rect x="867.21" y="299.00" width="8.50" height="15.60" fill="#fff" stroke-width="1.050"/>
<path d="M885.9 294.7V305.4"/>
<rect x="881.1" y="298.7" width="9.5" height="6.6" fill="#000" stroke="none"/>
<path d="M900.3 294.7V307.2"/>
<rect x="896.07" y="297.40" width="8.50" height="6.50" fill="#fff" stroke-width="1.050"/>
<path d="M914.8 292.2V299.9"/>
<rect x="910.40" y="294.70" width="8.70" height="2.00" fill="#fff" stroke="#2a2a2a" stroke-width="0.800"/>
<path d="M929.2 284.9V305.4"/>
<rect x="924.4" y="294.1" width="9.5" height="9.6" fill="#000" stroke="none"/>
<path d="M943.6 302.7V317.9"/>
<rect x="938.9" y="304.0" width="9.5" height="12.2" fill="#000" stroke="none"/>
<path d="M958.0 314.2V323.3"/>
<rect x="953.3" y="316.6" width="9.5" height="5.9" fill="#000" stroke="none"/>
<path d="M972.5 315.4V321.8"/>
<rect x="968.12" y="319.80" width="8.70" height="1.30" fill="#fff" stroke="#2a2a2a" stroke-width="0.800"/>
<path d="M986.9 314.7V327.0"/>
<rect x="982.55" y="315.40" width="8.70" height="2.70" fill="#fff" stroke="#2a2a2a" stroke-width="0.800"/>
<path d="M1001.3 315.4V343.2"/>
<rect x="996.6" y="315.5" width="9.5" height="27.6" fill="#000" stroke="none"/>
<path d="M1015.8 340.0V354.9"/>
<rect x="1011.0" y="342.7" width="9.5" height="6.9" fill="#000" stroke="none"/>
<path d="M1030.2 339.0V352.3"/>
<rect x="1025.94" y="346.00" width="8.50" height="2.90" fill="#fff" stroke-width="1.050"/>
<path d="M1044.6 342.1V363.1"/>
<rect x="1039.9" y="345.2" width="9.5" height="17.8" fill="#000" stroke="none"/>
<path d="M1059.0 355.2V365.9"/>
<rect x="1054.80" y="359.00" width="8.50" height="3.30" fill="#fff" stroke-width="1.050"/>
<path d="M1073.5 356.9V365.0"/>
<rect x="1068.7" y="357.9" width="9.5" height="7.0" fill="#000" stroke="none"/>
<path d="M1087.9 362.2V370.6"/>
<rect x="1083.2" y="364.0" width="9.5" height="5.3" fill="#000" stroke="none"/>
<path d="M1102.3 365.7V381.1"/>
<rect x="1097.6" y="368.7" width="9.5" height="9.7" fill="#000" stroke="none"/>
<path d="M1116.8 363.0V376.7"/>
<rect x="1112.52" y="370.30" width="8.50" height="2.70" fill="#fff" stroke-width="1.050"/>
</g>
<clipPath id="ci"><rect x="265.500" y="444" width="855" height="154"/></clipPath>
<g clip-path="url(#ci)" fill="none" stroke-width="0.900">
<polyline points="265.4,551.2 279.8,557.5 294.3,562.0 308.7,565.8 323.1,570.0 337.5,572.5 352.0,560.0 366.4,565.0 380.8,568.8 395.3,571.2 409.7,550.0 424.1,536.2 438.6,533.8 453.0,529.5 467.4,531.2 481.8,538.8 496.3,547.0 510.7,547.5 525.1,553.8 539.6,558.8 554.0,563.0 568.4,561.2 582.9,564.2 597.3,570.5 611.7,550.0 626.1,541.2 640.6,547.5 655.0,541.2 669.4,530.0 683.9,520.5 698.3,529.2 712.7,523.8 727.2,527.0 741.6,535.8 756.0,525.0 770.5,515.0 784.9,526.2 799.3,534.5 813.7,542.0 828.2,548.8 842.6,555.0 857.0,561.2 871.5,566.8 885.9,570.0 900.3,573.2 914.8,576.2 929.2,578.8 943.6,580.5 958.0,573.2 972.5,575.5 986.9,577.5 1001.3,580.5 1015.8,582.5 1030.2,584.5 1044.6,585.8 1059.0,587.0 1073.5,587.5" stroke="#f9ead3" stroke-dasharray="3 3"/>
<polyline points="265.4,568.8 279.8,547.5 294.3,546.2 308.7,546.2 323.1,536.2 337.5,533.2 352.0,541.2 366.4,548.8 380.8,546.2 395.3,551.2 409.7,557.5 424.1,561.2 438.6,566.2 453.0,570.5 467.4,574.2 481.8,576.8 496.3,575.0 510.7,577.5 525.1,580.5 539.6,565.0 554.0,562.5 568.4,566.8 582.9,561.8 597.3,556.2 611.7,561.8 626.1,566.2 640.6,570.0 655.0,573.8 669.4,576.2 683.9,578.8 698.3,580.8 712.7,582.5 727.2,584.2 741.6,586.2 756.0,587.5 770.5,587.5 784.9,584.2 799.3,576.8 813.7,579.5 828.2,564.2 842.6,563.8 857.0,552.5 871.5,540.8 885.9,533.8 900.3,530.5 914.8,526.2 929.2,513.8 943.6,523.8 958.0,533.0 972.5,542.0 986.9,532.5 1001.3,515.8 1015.8,518.8 1030.2,508.0 1044.6,500.8 1059.0,502.5 1073.5,507.0" stroke="#c4e587" stroke-dasharray="3 3"/>
<polyline points="265.4,543.2 279.8,547.5 294.3,548.2 308.7,547.0 323.1,541.8 337.5,535.5 352.0,537.5 366.4,538.8 380.8,538.0 395.3,536.2 409.7,542.5 424.1,540.0 438.6,538.0 453.0,533.0 467.4,526.2 481.8,520.5 496.3,519.2 510.7,516.2 525.1,513.2 539.6,523.2 554.0,531.2 568.4,537.5 582.9,542.5 597.3,544.2 611.7,546.8 626.1,544.5 640.6,542.5 655.0,538.2 669.4,530.0 683.9,521.2 698.3,513.2 712.7,504.2 727.2,495.8 741.6,488.2 756.0,480.0 770.5,471.2 784.9,467.0 799.3,469.5 813.7,470.8 828.2,483.8 842.6,493.8 857.0,503.8 871.5,507.5 885.9,507.5 900.3,505.8 914.8,500.8 929.2,494.2 943.6,489.2 958.0,490.5 972.5,491.5 986.9,489.5 1001.3,483.8 1015.8,478.2 1030.2,472.0 1044.6,465.0 1059.0,458.8 1073.5,452.5" stroke="#74d0d0" stroke-width="1"/>
</g>
<g fill="none" stroke="#000" stroke-width="1">
<path d="M1120.500 140.400H265.600V440.400H1121"/>
<path d="M1120.500 140V440.500"/>
<path d="M1122.500 443.600H265.600V597.600H1122.500"/>
<path d="M1120.500 443V598"/>
<path d="M1119.500 151.7H1122.600"/>
<path d="M1119.500 180.5H1122.600"/>
<path d="M1119.500 209.4H1122.600"/>
<path d="M1119.500 238.2H1122.600"/>
<path d="M1119.500 267.1H1122.600"/>
<path d="M1119.500 295.9H1122.600"/>
<path d="M1119.500 324.8H1122.600"/>
<path d="M1119.500 353.6H1122.600"/>
<path d="M1119.500 382.5H1122.600"/>
<path d="M1119.500 411.4H1122.600"/>
<path d="M265.4 598V601"/>
<path d="M323.1 598V601"/>
<path d="M380.8 598V601"/>
<path d="M438.6 598V601"/>
<path d="M496.3 598V601"/>
<path d="M554.0 598V601"/>
<path d="M611.7 598V601"/>
<path d="M669.4 598V601"/>
<path d="M727.2 598V601"/>
<path d="M784.9 598V601"/>
<path d="M842.6 598V601"/>
<path d="M900.3 598V601"/>
<path d="M958.0 598V601"/>
<path d="M1015.8 598V601"/>
<path d="M1073.5 598V601"/>
</g>
<g font-size="7.800" fill="#000" stroke="#000" stroke-width=".12">
<text x="1124.100" y="153.6" textLength="28.300">1.20146</text>
<text x="1124.100" y="182.4" textLength="28.300">1.20027</text>
<text x="1124.100" y="211.3" textLength="28.300">1.19908</text>
<text x="1124.100" y="240.2" textLength="28.300">1.19789</text>
<text x="1124.100" y="269.0" textLength="28.300">1.19670</text>
<text x="1124.100" y="297.8" textLength="28.300">1.19550</text>
<text x="1124.100" y="326.7" textLength="28.300">1.19431</text>
<text x="1124.100" y="355.5" textLength="28.300">1.19312</text>
<text x="1124.100" y="384.4" textLength="28.300">1.19193</text>
<text x="1124.100" y="413.2" textLength="28.300">1.19074</text>
<text x="1124" y="450.500" textLength="20.500">71.00</text>
<text x="1124.600" y="593.500" textLength="19">-0.80</text>
<rect x="1123" y="285.200" width="33.200" height="10.400" fill="#000"/>
<text x="1125.600" y="293.300" fill="#fff" stroke="#fff" textLength="28.300">1.19574</text>
</g>
<g font-size="8.700" fill="#000" stroke="#000" stroke-width=".2">
<text x="286.300" y="150.900" textLength="59.500">EURUSDm,M15</text><text x="352.500" y="150.900" textLength="136.800">1.19556 1.19579 1.19556 1.19574</text>
<text x="269.500" y="454.400" textLength="139.800">ADX(14) 66.52 +DI:40.86 -DI:3.42</text>
</g>
<g font-size="7.800" fill="#f8f8f8"><text x="381" y="609">30 Nov 2020</text><text x="439" y="609">30 Nov 18:00</text><text x="497" y="609">30 Nov 19:00</text></g>
<g><rect x="268.900" y="143.400" width="13.500" height="10" rx="1.200" fill="#f2f8ff" stroke="#3f8df0" stroke-width="1.200"/><path d="M268.400 143.300H282.900" stroke="#4a9af5" stroke-width="1.800"/><rect x="276.700" y="144.800" width="5.200" height="4" fill="#f3a48e"/><rect x="276.700" y="148.900" width="5.200" height="4" fill="#b5d0f3"/><path d="M270.300 147.800l1.500-1.700 1.400 1.500 1.400-1 1.300 0" stroke="#ee4438" stroke-width="0.950" fill="none"/><path d="M270.300 151.600l1.500-1.200 1.400 1.200 1.400-1.500 1.300 .700" stroke="#2f6fdc" stroke-width="0.950" fill="none"/></g>
</svg>
<svg class="abs" style="left:0;top:0" width="1200" height="745" fill="none"><path d="M265.700 616.400V633.400H354.700V616.400Z" fill="#fff"/><path d="M262 616.400H265.700V633.400H354.700V616.400H1164.300" stroke="#262626" stroke-width="1.200"/><path d="M439.300 620.300V631.800" stroke="#7c7c7c" stroke-width="1.100"/></svg>
<div class="abs t" style="left:275.00px;top:618.70px;line-height:14px;font-size:9.5px;letter-spacing:0.127px;">EURUSDm, M15</div>
<div class="abs t" style="left:365.70px;top:619.40px;line-height:14px;font-size:9.5px;letter-spacing:0.078px;color:#707070;">XAUUSDm, H1</div>
<div class="abs t" style="left:450.00px;top:619.40px;line-height:14px;font-size:9.5px;letter-spacing:0.119px;color:#707070;">BTCUSDm, H1</div>
<div class="abs t" style="left:1153.30px;top:620.60px;line-height:14px;font-size:9.5px;color:#222;font-weight:bold;">»</div>
<div class="abs" style="left:34.200px;top:640.400px;width:1130px;height:42.500px;background:#fff;border:1.200px solid #8a8a8a;border-left:1.300px solid #2b2b2b;border-top:1.600px solid #969696;border-bottom:none;box-sizing:border-box"></div>
<div class="abs" style="left:35.700px;top:642px;width:1110.800px;height:19.500px;background:#f9f9f9;border-bottom:1px solid #e7e7e7;box-sizing:border-box"></div>
<div class="abs" style="left:127.0px;top:642px;width:1px;height:19px;background:#e7e7e7"></div>
<div class="abs" style="left:220.5px;top:642px;width:1px;height:19px;background:#e7e7e7"></div>
<div class="abs" style="left:313.0px;top:642px;width:1px;height:19px;background:#e7e7e7"></div>
<div class="abs" style="left:405.5px;top:642px;width:1px;height:19px;background:#e7e7e7"></div>
<div class="abs" style="left:498.0px;top:642px;width:1px;height:19px;background:#e7e7e7"></div>
<div class="abs" style="left:591.0px;top:642px;width:1px;height:19px;background:#e7e7e7"></div>
<div class="abs" style="left:683.5px;top:642px;width:1px;height:19px;background:#e7e7e7"></div>
<div class="abs" style="left:776.0px;top:642px;width:1px;height:19px;background:#e7e7e7"></div>
<div class="abs" style="left:868.5px;top:642px;width:1px;height:19px;background:#e7e7e7"></div>
<div class="abs" style="left:961.0px;top:642px;width:1px;height:19px;background:#e7e7e7"></div>
<div class="abs" style="left:1053.5px;top:642px;width:1px;height:19px;background:#e7e7e7"></div>
<div class="abs" style="left:1146.0px;top:642px;width:1px;height:19px;background:#e7e7e7"></div>
<div class="abs t" style="left:40.50px;top:645.80px;line-height:14px;font-size:9.5px;letter-spacing:-0.107px;">Symbol</div>
<div class="abs t" style="left:134.10px;top:645.80px;line-height:14px;font-size:9.5px;letter-spacing:-0.022px;">Ticket</div>
<div class="abs t" style="left:273.11px;top:645.80px;line-height:14px;font-size:9.5px;">Time</div>
<div class="abs t" style="left:380.52px;top:645.80px;line-height:14px;font-size:9.5px;">Type</div>
<div class="abs t" style="left:460.78px;top:645.80px;line-height:14px;font-size:9.5px;">Volume</div>
<div class="abs t" style="left:564.66px;top:645.80px;line-height:14px;font-size:9.5px;">Price</div>
<div class="abs t" style="left:658.00px;top:645.80px;line-height:14px;font-size:9.5px;letter-spacing:0.500px;">S / L</div>
<div class="abs t" style="left:750.46px;top:645.80px;line-height:14px;font-size:9.5px;letter-spacing:0.463px;">T / P</div>
<div class="abs t" style="left:842.66px;top:645.80px;line-height:14px;font-size:9.5px;">Price</div>
<div class="abs t" style="left:932.91px;top:645.80px;line-height:14px;font-size:9.5px;">Swap</div>
<div class="abs t" style="left:1026.23px;top:645.80px;line-height:14px;font-size:9.5px;">Profit</div>
<div class="abs t" style="left:1099.61px;top:645.80px;line-height:14px;font-size:9.5px;">Comment</div>
<svg class="abs" style="left:300px;top:649px" width="8" height="6" viewBox="0 0 8 6"><path d="M3.900 .800L7 5H.800Z" fill="#8a8a8a"/></svg>
<svg class="abs" style="left:0;top:0" width="1200" height="745" fill="none"><path d="M37.400 682.450V699H80.300V682.450Z" fill="#fff"/><path d="M34.200 682.450H37.400V699H80.300V682.450H1164.300" stroke="#262626" stroke-width="1.200"/><path d="M133.100 686.300V697.400" stroke="#7c7c7c" stroke-width="1.100"/><g stroke="#c6c6c6" stroke-width="1.100"><path d="M711.500 687V703.500M808.500 687V703.500M873.500 687V703.500M938.500 687V703.500M1003.500 687V703.500M1068 687V703.500"/></g></svg>
<div class="abs t" style="left:47.00px;top:684.65px;line-height:14px;font-size:9.5px;letter-spacing:0.067px;">Trade</div>
<div class="abs t" style="left:91.80px;top:685.70px;line-height:14px;font-size:9.5px;letter-spacing:-0.087px;color:#707070;">History</div>
<div class="abs t" style="left:142.90px;top:685.70px;line-height:14px;font-size:9.5px;letter-spacing:0.279px;color:#707070;">Journal</div>
</div></div>
</body></html>
